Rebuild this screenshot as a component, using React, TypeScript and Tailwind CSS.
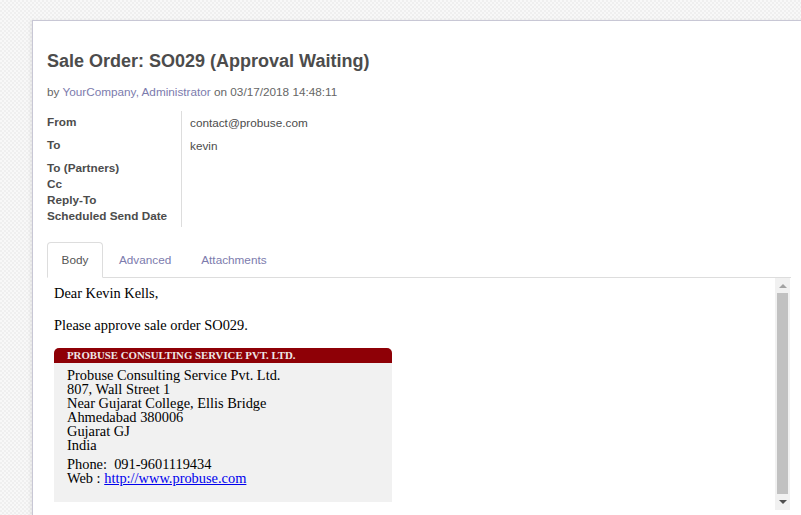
import React from 'react';

const labels = ['To (Partners)', 'Cc', 'Reply-To', 'Scheduled Send Date'];

const App: React.FC = () => {
  return (
    <div className="w-[801px] h-[515px] overflow-hidden bg-[#f6f6f6] bg-[repeating-conic-gradient(#efefef_0%_25%,#f8f8f8_0%_50%)] bg-[length:4px_4px] font-['Liberation_Sans',Arial,sans-serif]">
      <div className="ml-[32px] mt-[20px] w-[800px] h-[520px] bg-white border-l border-t border-[#c8c7d5] shadow-[-2px_0_3px_rgba(0,0,0,0.06)] pl-[14px] pt-[28px]">
        {/* header */}
        <h1 className="text-[18px] leading-[24px] font-bold text-[#4c4c4c]">Sale Order: SO029 (Approval Waiting)</h1>
        <p className="mt-[11px] text-[11.75px] leading-[16px] text-[#666]">
          by <span className="text-[#7c7bad]">YourCompany, Administrator</span> on 03/17/2018 14:48:11
        </p>

        {/* fields */}
        <div className="mt-[11px] flex text-[11.75px] leading-[16px]">
          <div className="w-[135px] border-r border-[#ddd] font-bold text-[#4c4c4c] py-[3px]">
            <div className="h-[23px]">From</div>
            <div className="h-[23px]">To</div>
            {labels.map(l => (
              <div key={l}>{l}</div>
            ))}
          </div>
          <div className="pl-[8px] text-[#4c4c4c] pt-[4px]">
            <div className="h-[23px]">contact@probuse.com</div>
            <div>kevin</div>
          </div>
        </div>

        {/* tabs */}
        <div className="mt-[15px] w-[744px] flex border-b border-[#ddd] text-[11.75px] leading-[16px]">
          <div className="w-[56px] h-[36px] -mb-px border border-[#ddd] border-b-white rounded-t-[4px] bg-white text-[#555] flex items-center justify-center">Body</div>
          <div className="px-[16px] h-[35px] flex items-center text-[#7c7bad]">Advanced</div>
          <div className="px-[14px] h-[35px] flex items-center text-[#7c7bad]">Attachments</div>
        </div>

        {/* body */}
        <div className="w-[744px] flex">
          <div className="flex-1 pl-[7px] pt-[6px] font-['Liberation_Serif','Times_New_Roman',serif] text-black text-[14.4px] leading-[18px]">
            <p>Dear Kevin Kells,</p>
            <p className="mt-[14px]">Please approve sale order SO029.</p>
            <div className="mt-[14px] w-[338px] h-[154px] bg-[#f1f1f1] rounded-t-[5px]">
              <div className="h-[15px] bg-[#8e0006] rounded-t-[5px] pl-[13px] text-[10.8px] leading-[15px] font-bold text-[#efe6e6]">
                PROBUSE CONSULTING SERVICE PVT. LTD.
              </div>
              <div className="pl-[13px] pt-[5px] leading-[14px]">
                <div>Probuse Consulting Service Pvt. Ltd.</div>
                <div>807, Wall Street 1</div>
                <div>Near Gujarat College, Ellis Bridge</div>
                <div>Ahmedabad 380006</div>
                <div>Gujarat GJ</div>
                <div>India</div>
                <div className="mt-[5px]">Phone:&nbsp; 091-9601119434</div>
                <div>
                  Web : <a className="text-[#0000ee] underline">http://www.probuse.com</a>
                </div>
              </div>
            </div>
          </div>
          {/* scrollbar */}
          <div className="w-[15px] h-[232px] mr-[1px] bg-[#f1f1f1] flex flex-col items-center">
            <div className="h-[15px] flex items-center justify-center">
              <div className="w-0 h-0 border-l-[4px] border-r-[4px] border-b-[4px] border-l-transparent border-r-transparent border-b-[#a3a3a3]" />
            </div>
            <div className="w-[11px] h-[201px] bg-[#c1c1c1]" />
            <div className="h-[15px] flex items-center justify-center">
              <div className="w-0 h-0 border-l-[4px] border-r-[4px] border-t-[4px] border-l-transparent border-r-transparent border-t-[#505050]" />
            </div>
          </div>
        </div>
      </div>
    </div>
  );
};

export default App;
